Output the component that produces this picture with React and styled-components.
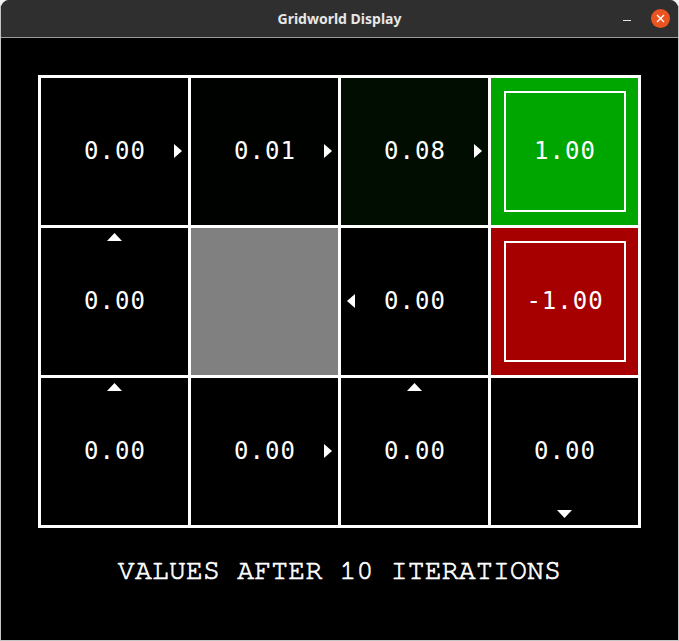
import React from "react";
import styled, { createGlobalStyle } from "styled-components";

const GlobalStyle = createGlobalStyle`
  html, body {
    margin: 0;
    padding: 0;
    background: #f2f2f2;
  }
`;

const Window = styled.div`
  width: 679px;
  height: 641px;
  box-sizing: border-box;
  display: flex;
  flex-direction: column;
  border-radius: 9px 9px 0 0;
  overflow: hidden;
  border: 1px solid #c4c4c4;
  border-top: none;
  background: #000;
`;

const TitleBar = styled.div`
  position: relative;
  height: 37px;
  flex: none;
  display: flex;
  align-items: center;
  justify-content: center;
  background: #302f2f;
  border-bottom: 1px solid #9a9a9a;
  font-family: "Noto Sans", "DejaVu Sans", sans-serif;
  font-weight: 700;
  font-size: 14px;
  color: #e6e6e6;
`;

const Controls = styled.div`
  position: absolute;
  right: 8px;
  top: 0;
  height: 37px;
  display: flex;
  align-items: center;
  gap: 20px;
`;

const Minimize = styled.div`
  width: 8px;
  height: 1px;
  margin-top: 4px;
  background: #e6e6e6;
`;

const Close = styled.div`
  width: 19px;
  height: 19px;
  border-radius: 50%;
  background: #e95420;
  display: flex;
  align-items: center;
  justify-content: center;
`;

const Content = styled.div`
  flex: 1;
  display: flex;
  flex-direction: column;
  align-items: center;
  padding-top: 37px;
  background: #000;
`;

const Grid = styled.div`
  display: grid;
  grid-template-columns: repeat(4, 147px);
  grid-template-rows: repeat(3, 147px);
  gap: 3px;
  padding: 3px;
  background: #fff;
`;

const Cell = styled.div`
  position: relative;
  display: flex;
  align-items: center;
  justify-content: center;
  background: ${(p) => p.$bg || "#000"};
`;

const Terminal = styled.div`
  width: 118px;
  height: 117px;
  border: 2px solid #fff;
  display: flex;
  align-items: center;
  justify-content: center;
`;

const Value = styled.span`
  font-family: "DejaVu Sans Mono", monospace;
  font-size: 24px;
  letter-spacing: 1px;
  padding-left: 1px;
  color: #fff;
  margin-top: -1px;
`;

const Caption = styled.div`
  margin-top: 27px;
  font-family: "Nimbus Mono PS", "FreeMono", "Liberation Mono", "Courier New", monospace;
  font-size: 28px;
  -webkit-text-stroke: 0.7px #fff;
  letter-spacing: 0.25px;
  line-height: 32px;
  color: #fff;
  white-space: pre;
`;

const ArrowBox = styled.svg`
  position: absolute;
  ${(p) => p.$pos}
`;

const arrows = {
  right: { w: 8, h: 14, pts: "0,0 8,7 0,14", pos: "right: 6px; top: 66px;" },
  left: { w: 8, h: 14, pts: "8,0 0,7 8,14", pos: "left: 6px; top: 66px;" },
  up: { w: 15, h: 8, pts: "0,8 7.5,0 15,8", pos: "left: 66px; top: 5px;" },
  down: { w: 15, h: 8, pts: "0,0 7.5,8 15,0", pos: "left: 66px; bottom: 7px;" },
};

const Arrow = ({ dir }) => {
  const a = arrows[dir];
  return (
    <ArrowBox $pos={a.pos} width={a.w} height={a.h} viewBox={`0 0 ${a.w} ${a.h}`}>
      <polygon points={a.pts} fill="#fff" />
    </ArrowBox>
  );
};

const cells = [
  { v: "0.00", dir: "right" },
  { v: "0.01", dir: "right", bg: "#000200" },
  { v: "0.08", dir: "right", bg: "#000d00" },
  { v: "1.00", terminal: true, bg: "#00a600" },
  { v: "0.00", dir: "up" },
  { wall: true, bg: "#808080" },
  { v: "0.00", dir: "left" },
  { v: "-1.00", terminal: true, bg: "#a60000" },
  { v: "0.00", dir: "up" },
  { v: "0.00", dir: "right" },
  { v: "0.00", dir: "up" },
  { v: "0.00", dir: "down" },
];

const App = () => (
  <>
    <GlobalStyle />
    <Window>
      <TitleBar>
        Gridworld Display
        <Controls>
          <Minimize />
          <Close>
            <svg width="9" height="9" viewBox="0 0 9 9">
              <path d="M1 1 L8 8 M8 1 L1 8" stroke="#fff" strokeWidth="1.4" />
            </svg>
          </Close>
        </Controls>
      </TitleBar>
      <Content>
        <Grid>
          {cells.map((c, i) => (
            <Cell key={i} $bg={c.bg}>
              {c.terminal ? (
                <Terminal>
                  <Value>{c.v}</Value>
                </Terminal>
              ) : (
                !c.wall && <Value>{c.v}</Value>
              )}
              {c.dir && <Arrow dir={c.dir} />}
            </Cell>
          ))}
        </Grid>
        <Caption>VALUES AFTER 10 ITERATIONS</Caption>
      </Content>
    </Window>
  </>
);

export default App;
